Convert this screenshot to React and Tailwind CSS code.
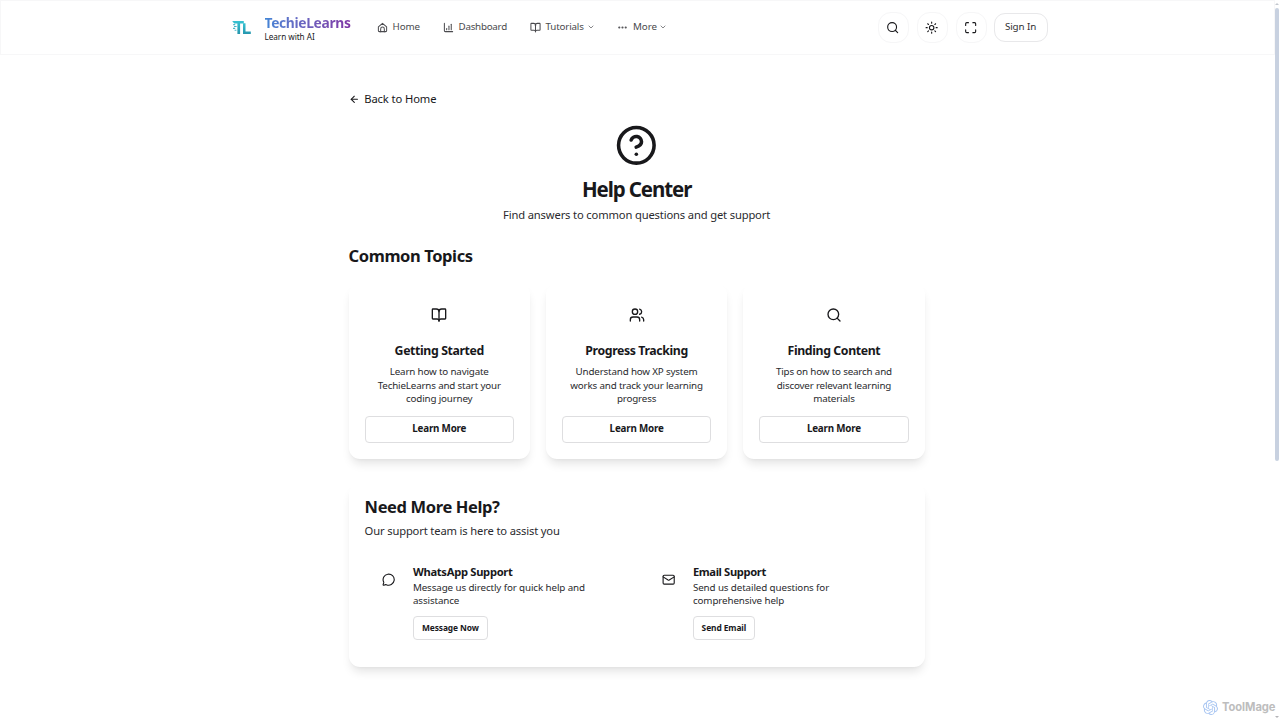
import {
  ArrowLeft,
  BookOpen,
  ChevronDown,
  Ellipsis,
  Mail,
  Maximize,
  MessageCircle,
  Search,
  Sun,
  Users,
} from 'lucide-react';
import { SiOpenai } from 'react-icons/si';

const topics = [
  {
    title: 'Getting Started',
    icon: BookOpen,
    lines: ['Learn how to navigate', 'TechieLearns and start your', 'coding journey'],
  },
  {
    title: 'Progress Tracking',
    icon: Users,
    lines: ['Understand how XP system', 'works and track your learning', 'progress'],
  },
  {
    title: 'Finding Content',
    icon: Search,
    lines: ['Tips on how to search and', 'discover relevant learning', 'materials'],
  },
];

const contacts = [
  {
    title: 'WhatsApp Support',
    icon: MessageCircle,
    lines: ['Message us directly for quick help and', 'assistance'],
    action: 'Message Now',
    titleClass: 'tracking-[-0.3px]',
    buttonClass: 'w-[75px]',
  },
  {
    title: 'Email Support',
    icon: Mail,
    lines: ['Send us detailed questions for', 'comprehensive help'],
    action: 'Send Email',
    titleClass: 'tracking-[-0.38px]',
    buttonClass: 'w-[62px]',
  },
];

const HomeIcon = () => (
  <svg className="w-[11px] h-[11px]" viewBox="0 0 24 24" fill="none" stroke="currentColor" strokeWidth="2.2" strokeLinecap="round" strokeLinejoin="round">
    <path d="M3 10.5 12 3l9 7.5V19a2 2 0 0 1-2 2H5a2 2 0 0 1-2-2z" />
    <path d="M8 21v-6a4 4 0 0 1 8 0v6" />
  </svg>
);

const ChartIcon = () => (
  <svg className="w-[11px] h-[11px]" viewBox="0 0 24 24" fill="none" stroke="currentColor" strokeWidth="2.2" strokeLinecap="round" strokeLinejoin="round">
    <path d="M3 3v16a2 2 0 0 0 2 2h16" />
    <path d="M8 17v-3" />
    <path d="M13 17V9" />
    <path d="M18 17V5" />
  </svg>
);

const Logo = () => (
  <svg className="w-[21px] h-[16px]" viewBox="0 0 21 16" fill="none">
    <defs>
      <linearGradient id="logo" x1="0" y1="0" x2="0" y2="1">
        <stop offset="0" stopColor="#38c3d2" />
        <stop offset="1" stopColor="#2596ae" />
      </linearGradient>
    </defs>
    <path d="M1.2 1h11.6v2.4H9.1V14H6.4V3.4H3.2z" fill="url(#logo)" />
    <path d="M12 3.2h2.5v8.4h5.3V14H12z" fill="url(#logo)" />
    <path d="M2.2 4.6h2M3 6.5h2.6M2 8.4h2.2M3.6 10.2h1.8" stroke="#48b6c9" strokeWidth="1.1" />
  </svg>
);

const Header = () => (
  <header className="h-[55px] w-[1275px] border border-[#f7f7f8] flex items-center pl-[230px]">
    <Logo />
    <div className="w-[112px] pl-[12.5px]">
      <div className="w-fit text-[13.8px] leading-[17px] font-bold tracking-[-0.33px] whitespace-nowrap bg-gradient-to-r from-[#4285d6] to-[#7e35a5] bg-clip-text text-transparent">
        TechieLearns
      </div>
      <div className="text-[8.2px] leading-[11px] tracking-[-0.05px] whitespace-nowrap text-[#18181b]">Learn with AI</div>
    </div>
    <nav className="flex items-center pl-[12.5px] pb-px text-[9.8px] text-[#4a4a4e] whitespace-nowrap">
      <a className="flex items-center gap-[5px] w-[66px] tracking-[-0.13px]"><HomeIcon />Home</a>
      <a className="flex items-center gap-[5px] w-[87px] tracking-[-0.25px]"><ChartIcon />Dashboard</a>
      <a className="flex items-center w-[87.5px] tracking-[-0.17px]">
        <BookOpen className="w-[11px] h-[11px] mr-[5px]" strokeWidth={2.2} />Tutorials<ChevronDown className="w-2 h-2 ml-[3px]" />
      </a>
      <a className="flex items-center tracking-[-0.04px]">
        <Ellipsis className="w-[11px] h-[11px] mr-[5px]" strokeWidth={2.7} />More<ChevronDown className="w-2 h-2 ml-[2px]" />
      </a>
    </nav>
    <div className="ml-auto mr-[226.5px] flex items-center gap-2 text-[#18181b]">
      {[Search, Sun, Maximize].map((Icon, i) => (
        <button key={i} className="w-[31px] h-[31px] rounded-[13px] border border-[#f6f6f7] flex items-center justify-center">
          <Icon className="w-[13.33px] h-[13.33px]" />
        </button>
      ))}
      <button className="w-[54px] h-[29px] -ml-px rounded-[11px] border border-[#e8e8ea] text-[9.8px] tracking-[-0.1px] text-[#303034]">
        Sign In
      </button>
    </div>
  </header>
);

const TopicCard = ({ topic }) => {
  const Icon = topic.icon;
  return (
    <div className="h-[176px] p-4 rounded-[11px] bg-white flex flex-col items-center shadow-[0_7px_10px_-2px_rgba(0,0,0,0.1),0_2px_4px_-3px_rgba(0,0,0,0.1)]">
      <div className="h-8 flex items-center">
        <Icon className="w-4 h-4" />
      </div>
      <h3 className="mt-[10px] text-[12.3px] leading-[19px] font-bold tracking-[-0.38px] whitespace-nowrap">{topic.title}</h3>
      <p className="mt-[5.5px] text-center text-[9.8px] leading-[13.4px] tracking-[-0.17px] text-[#2a2a2e]">
        {topic.lines.map((line) => <span key={line} className="block whitespace-nowrap">{line}</span>)}
      </p>
      <button className="mt-auto w-full h-[27px] rounded-[4px] border border-[#dedee0] text-[9.8px] font-bold tracking-[-0.19px]">
        Learn More
      </button>
    </div>
  );
};

const ContactItem = ({ contact }) => {
  const Icon = contact.icon;
  return (
    <div className="flex pl-[17px]">
      <Icon className="w-[13.33px] h-[13.33px] mt-[15px] mr-[18px] shrink-0" />
      <div>
        <h3 className={`pt-[6px] text-[11.2px] leading-[16px] font-bold ${contact.titleClass}`}>{contact.title}</h3>
        <p className="mt-px text-[9.8px] leading-[13.33px] tracking-[-0.11px] text-[#2a2a2e]">
          {contact.lines.map((line) => <span key={line} className="block whitespace-nowrap">{line}</span>)}
        </p>
        <button className={`mt-[9px] h-6 rounded-[4px] border border-[#dedee0] text-[8.4px] font-bold tracking-[-0.08px] whitespace-nowrap ${contact.buttonClass}`}>
          {contact.action}
        </button>
      </div>
    </div>
  );
};

const App = () => (
  <div className="relative w-[1280px] h-[720px] overflow-hidden bg-white font-['Noto_Sans','Open_Sans',sans-serif] text-[#18181b]">
    <Header />

    <main className="w-[576px] ml-[348.6px] pt-9">
      <a className="h-4 flex items-center text-[11.2px] tracking-[-0.1px]">
        <ArrowLeft className="w-[10.67px] h-[10.67px] mr-[5px]" strokeWidth={2.4} />Back to Home
      </a>

      <div className="pt-[17px] flex flex-col items-center text-center">
        <svg className="w-[42.67px] h-[42.67px]" viewBox="0 0 24 24" fill="none" stroke="currentColor" strokeWidth="2" strokeLinecap="round" strokeLinejoin="round">
          <circle cx="12" cy="12" r="10" />
          <path d="M9.09 9a3 3 0 0 1 5.83 1c0 2-3 3-3 3" />
          <path d="M12 17h.01" />
        </svg>
        <h1 className="mt-[9px] text-[20.5px] leading-[27px] font-bold tracking-[-1.1px]">Help Center</h1>
        <p className="mt-[4px] text-[11.2px] leading-[16px] tracking-[-0.15px] text-[#2a2a2e]">
          Find answers to common questions and get support
        </p>
      </div>

      <h2 className="mt-[22px] text-[16.5px] leading-[22px] font-bold tracking-[-0.4px]">Common Topics</h2>
      <div className="mt-4 grid grid-cols-3 gap-4">
        {topics.map((topic) => <TopicCard key={topic.title} topic={topic} />)}
      </div>

      <section className="mt-6 h-[184px] p-4 rounded-[11px] bg-white shadow-[0_7px_10px_-2px_rgba(0,0,0,0.1),0_2px_4px_-3px_rgba(0,0,0,0.1)]">
        <h2 className="-mt-[3px] text-[16.5px] leading-[22px] font-bold tracking-[-0.37px]">Need More Help?</h2>
        <p className="mt-[5px] text-[11.2px] leading-[16px] tracking-[-0.15px] text-[#2a2a2e]">
          Our support team is here to assist you
        </p>
        <div className="mt-[19px] grid grid-cols-2 gap-4">
          {contacts.map((contact) => <ContactItem key={contact.title} contact={contact} />)}
        </div>
      </section>
    </main>

    {/* page scrollbar */}
    <div className="absolute right-0 top-0 w-[6px] h-full flex flex-col items-center">
      <div className="mt-[3px] border-x-2 border-b-2 border-x-transparent border-b-[#c3c7ce]" />
      <div className="mt-[3px] w-1 h-[453px] rounded-full bg-[#c8d1e0]" />
      <div className="mt-auto mb-[2px] border-x-2 border-t-2 border-x-transparent border-t-[#b4b4b8]" />
    </div>

    {/* watermark */}
    <div className="absolute right-[4.5px] bottom-[5px] flex items-center gap-1 text-[#bdbdbd]">
      <SiOpenai className="w-[15px] h-[15px] text-[#a9c6f2]" />
      <span className="font-['Inter',sans-serif] text-[11.2px] leading-4 font-bold tracking-[-0.05px] whitespace-nowrap">ToolMage</span>
    </div>
  </div>
);

export default App;
